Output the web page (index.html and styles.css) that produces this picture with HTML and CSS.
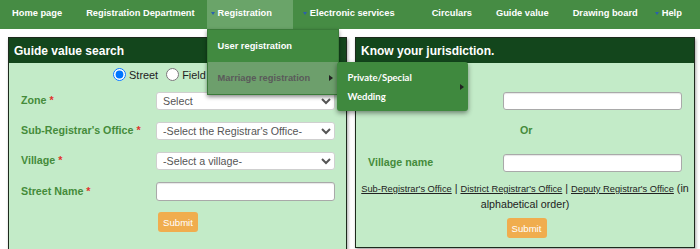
FILE: index.html
```html
<!DOCTYPE html>
<html>
<head>
    <title>Guide value</title>
    <link rel="stylesheet" href="styles.css">
</head>
<body>
    <!-- Menu -->
    <ul class="nav">
        <li>Home page</li>
        <li>Registration Department</li>
        <li class="dd nav-reg open"><span class="caret"></span>Registration
            <ul class="menu">
                <li>User registration</li>
                <li class="sub active">Marriage registration<span class="arrow"></span>
                    <ul class="submenu">
                        <li>Private/Special</li>
                        <li>Wedding</li>
                        <span class="arrow sub-arrow"></span>
                    </ul>
                </li>
            </ul>
        </li>
        <li class="dd nav-eserv"><span class="caret"></span>Electronic services</li>
        <li>Circulars</li>
        <li>Guide value</li>
        <li>Drawing board</li>
        <li class="dd nav-help"><span class="caret"></span>Help</li>
    </ul>

    <!-- Conteúdo -->
    <div class="content">
        <div class="panel panel-left">
            <div class="panel-head">Guide value search</div>
            <div class="panel-body">
                <div class="radios">
                    <label><input type="radio" name="tipo" checked>Street</label>
                    <label><input type="radio" name="tipo">Field survey</label>
                </div>
                <div class="row">
                    <label>Zone <span class="req">*</span></label>
                    <select><option>Select</option></select>
                </div>
                <div class="row">
                    <label>Sub-Registrar's Office <span class="req">*</span></label>
                    <select><option>-Select the Registrar's Office-</option></select>
                </div>
                <div class="row">
                    <label>Village <span class="req">*</span></label>
                    <select><option>-Select a village-</option></select>
                </div>
                <div class="row">
                    <label>Street Name <span class="req">*</span></label>
                    <input type="text">
                </div>
                <div class="row">
                    <span></span>
                    <div><button class="btn">Submit</button></div>
                </div>
            </div>
        </div>

        <div class="panel panel-right">
            <div class="panel-head">Know your jurisdiction.</div>
            <div class="panel-body">
                <div class="row">
                    <label>Survey number</label>
                    <input type="text">
                </div>
                <div class="row row-or">
                    <span></span>
                    <span class="or">Or</span>
                </div>
                <div class="row row-village">
                    <label>Village name</label>
                    <input type="text">
                </div>
                <p class="links">
                    <a href="#">Sub-Registrar's Office</a> | <a href="#">District Registrar's Office</a> | <a href="#">Deputy Registrar's Office</a> (in alphabetical order)
                </p>
                <div class="center"><button class="btn">Submit</button></div>
            </div>
        </div>
    </div>
</body>
</html>
```

FILE: styles.css
```css
body {
    margin: 0;
    padding: 0;
    background-color: white;
    color: #222;
    font-family: "Liberation Sans", Arial, sans-serif;
    font-size: 10.7px;
}
ul {
    list-style: none;
    margin: 0;
    padding: 0;
}

/* menu */
.nav {
    display: flex;
    height: 29px;
    background-color: #468c44;
    position: relative;
    z-index: 10;
}
.nav > li {
    position: relative;
    padding: 0 12px;
    color: white;
    font-weight: bold;
    font-size: 9.3px;
    line-height: 27px;
    white-space: nowrap;
}
.nav .caret {
    display: inline-block;
    width: 0;
    height: 0;
    border-left: 2px solid transparent;
    border-right: 2px solid transparent;
    border-top: 3px solid #2a5fae;
    margin-right: 3px;
    vertical-align: middle;
}
.nav .nav-reg {
    padding: 0 21px 0 4px;
}
.nav .nav-reg.open {
    background-color: #6aa469;
    height: 29px;
}
.nav .nav-eserv {
    padding: 0 25px 0 10px;
}
.nav .nav-help {
    padding: 0 12px 0 5px;
}
.menu {
    position: absolute;
    top: 29px;
    left: 0;
    width: 130px;
    background-color: #418a40;
    border: 1px solid #3a7a39;
    box-shadow: 0 2px 4px rgba(0, 0, 0, 0.45);
}
.menu > li {
    position: relative;
    height: 32px;
    line-height: 32px;
    padding: 0 10px;
    color: white;
}
.menu > li.active {
    background-color: #6d9f6c;
    color: #5a5a5a;
}
.arrow {
    position: absolute;
    right: 5px;
    top: 13px;
    width: 0;
    height: 0;
    border-top: 3px solid transparent;
    border-bottom: 3px solid transparent;
    border-left: 4px solid #222;
}
.submenu {
    position: absolute;
    left: 129px;
    top: 0;
    width: 131px;
    height: 49px;
    padding-top: 6px;
    box-sizing: border-box;
    background-color: #3f893e;
    border-radius: 3px;
    box-shadow: 0 2px 5px rgba(0, 0, 0, 0.45);
}
.submenu li {
    font-family: Lato, "Liberation Sans", sans-serif;
    font-size: 9.5px;
    line-height: 19px;
    padding: 0 11px;
    color: white;
}
.sub-arrow {
    top: 22px;
    right: 4px;
}

/* paineis */
.content {
    display: grid;
    grid-template-columns: 339px 340px;
    gap: 8px;
    padding: 8px 0 0 8px;
    align-items: start;
}
.panel {
    background-color: #c3ebc8;
    border: 1px solid #1d2a1d;
    box-shadow: 1px 2px 3px rgba(0, 0, 0, 0.35);
}
.panel-head {
    background-color: #13461c;
    color: white;
    font-size: 12px;
    font-weight: bold;
    height: 25px;
    line-height: 27px;
    padding-left: 5px;
}
.panel-body {
    padding: 5px 0 9px 0;
}
.panel-left .panel-body {
    padding-bottom: 30px;
}
.panel-right .panel-body {
    padding-top: 29px;
}
.radios {
    text-align: center;
    height: 14px;
    line-height: 14px;
    font-size: 10.9px;
    margin-bottom: 10px;
    padding-right: 6px;
}
.radios input {
    margin: 0 3px 0 5px;
    vertical-align: -2px;
}
.row {
    display: grid;
    grid-template-columns: 135px 179px;
    padding-left: 12px;
    align-items: center;
    margin-bottom: 12px;
}
.row label {
    color: #458b3b;
    font-weight: bold;
    white-space: nowrap;
    margin-top: -2px;
}
.req {
    color: #e0312c;
}
select, input[type="text"] {
    box-sizing: border-box;
    width: 179px;
    height: 18px;
    margin: 0;
    border: 1px solid #cfcfcf;
    border-radius: 3px;
    background-color: white;
    font-family: "Liberation Sans", Arial, sans-serif;
    font-size: 10.7px;
    color: #555;
    padding: 0 2px;
}
input[type="text"] {
    height: 19px;
    border: 1px solid #a9a9a9;
    box-shadow: inset 0 1px 1px rgba(0, 0, 0, 0.1);
}
.panel-left .row:nth-child(5) {
    margin-bottom: 11px;
}
.btn {
    background-color: #f0ad4e;
    color: white;
    border: none;
    border-radius: 3px;
    font-family: "Liberation Sans", Arial, sans-serif;
    font-size: 9.6px;
    width: 40px;
    height: 20px;
    padding: 0;
    margin-left: 2px;
}
.panel-right .row {
    margin-bottom: 0;
}
.panel-right input[type="text"] {
    height: 18px;
}
.row-or {
    height: 18px;
    margin-top: 11px;
}
.or {
    color: #458b3b;
    font-weight: bold;
    margin-left: 17px;
}
.row-village {
    margin-top: 15px;
}
.links {
    margin: 9px 0 6px 0;
    padding: 0 3px;
    text-align: center;
    line-height: 15px;
    font-size: 10.7px;
}
.links a {
    color: #222;
    font-size: 9.3px;
}
.center {
    text-align: center;
}
.center .btn {
    margin-left: 3px;
}
```
